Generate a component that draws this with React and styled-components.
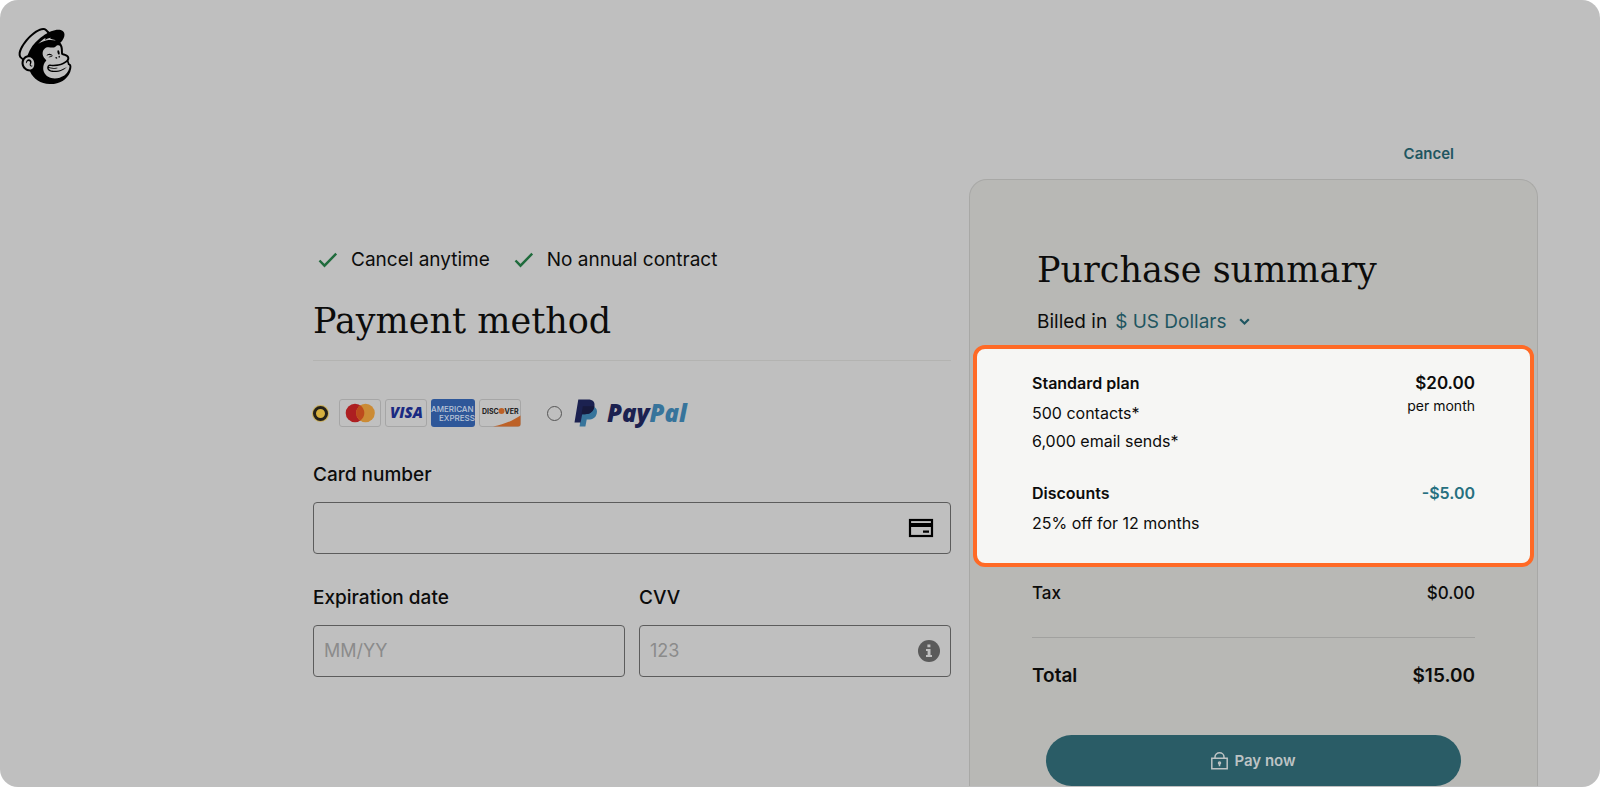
import React, { useState } from 'react';
import styled, { createGlobalStyle } from 'styled-components';
import { SiMailchimp } from 'react-icons/si';

const GlobalStyle = createGlobalStyle`
  * {
    box-sizing: border-box;
  }

  body {
    margin: 0;
    background: #fff;
    color: #0c0c0b;
    font-family: Inter, "Liberation Sans", sans-serif;
  }
`;

const Page = styled.div`
  min-height: 100vh;
  border-radius: 18px;
  background: #bfbfbf;
  overflow: hidden;
`;

const Header = styled.header`
  display: flex;
  padding: 28px 17px 0;

  a {
    display: flex;
    color: #000;
  }
`;

const Main = styled.main`
  display: grid;
  grid-template-columns: minmax(0, 638fr) minmax(0, 569fr);
  gap: 18px;
  padding: 60px 62px 0 313px;
`;

const PaymentForm = styled.form`
  padding-top: 104px;
`;

const Benefits = styled.ul`
  display: flex;
  gap: 24px;
  margin: 0 0 25px;
  padding: 0 0 0 5px;
  list-style: none;
  font-size: 19px;
  line-height: 24px;

  li {
    display: flex;
    align-items: center;
    gap: 13px;
  }
`;

const Title = styled.h2`
  margin: 0;
  font-family: "DejaVu Serif", serif;
  font-size: 35px;
  font-weight: 400;
  line-height: 48px;
`;

const FormTitle = styled(Title)`
  padding-bottom: 15px;
  border-bottom: 1px solid #b3b3b1;
`;

const Methods = styled.fieldset`
  display: flex;
  align-items: center;
  gap: 26px;
  height: 28px;
  margin: 38px 0 36px;
  padding: 0;
  border: 0;
`;

const Method = styled.label`
  display: flex;
  align-items: center;
  gap: ${props => props.$gap};
`;

const Radio = styled.input`
  appearance: none;
  width: 15px;
  height: 15px;
  margin: 0;
  border: 1px solid #555;
  border-radius: 50%;

  &:checked {
    border: 3px solid #24211a;
    background: #d6b03f;
    box-shadow: 0 0 0 1px #c9ae58;
  }
`;

const Cards = styled.span`
  display: flex;
  gap: 4px;
`;

const PayPalName = styled.span`
  color: #1b2150;
  font-family: "Open Sans", sans-serif;
  font-size: 24px;
  font-style: italic;
  font-weight: 800;
  line-height: 28px;

  span {
    color: #37749b;
  }
`;

const PayPalLogo = styled.span`
  display: flex;
  align-items: center;
  gap: 9px;
`;

const Field = styled.div`
  flex: 1;
  min-width: 0;
  margin-bottom: 32px;

  label {
    display: block;
    margin-bottom: 15px;
    font-size: 19px;
    font-weight: 500;
    line-height: 24px;
  }
`;

const FieldRow = styled.div`
  display: flex;
  gap: 14px;
`;

const InputBox = styled.div`
  display: flex;
  align-items: center;
  height: 52px;
  padding: 0 ${props => props.$end || '10px'} 0 10px;
  border: 1px solid #5c5c5c;
  border-radius: 4px;
`;

const Input = styled.input`
  flex: 1;
  min-width: 0;
  padding: 0;
  border: 0;
  outline: 0;
  background: transparent;
  font: 18px/24px Inter, "Liberation Sans", sans-serif;

  &::placeholder {
    color: #8b8b8b;
    opacity: 1;
  }
`;

const CancelRow = styled.div`
  padding: 0 84px 15px;
  font-size: 15px;
  font-weight: 600;
  line-height: 20px;
  text-align: right;

  a {
    color: #1f5661;
    text-decoration: none;
  }
`;

const Panel = styled.section`
  padding-top: 66px;
  border: 1px solid #a8a8a6;
  border-bottom: 0;
  border-radius: 18px 18px 0 0;
  background: #b8b8b5;
`;

const PanelHead = styled.div`
  padding: 0 67px;
`;

const Currency = styled.div`
  display: flex;
  align-items: center;
  gap: 8px;
  margin: 16px 0 11px;
  font-size: 19px;
  line-height: 24px;
`;

const CurrencySelect = styled.span`
  display: flex;
  align-items: center;
  gap: 12px;
  color: #1f5661;

  select {
    appearance: none;
    padding: 0;
    border: 0;
    outline: 0;
    background: transparent;
    color: inherit;
    font: inherit;
  }
`;

const Highlight = styled.div`
  margin: 0 3px;
  padding: 22px 55px 26px;
  border: 4px solid #ff6a26;
  border-radius: 12px;
  background: #f6f6f4;
`;

const Item = styled.div`
  display: flex;
  justify-content: space-between;

  & + & {
    margin-top: 26px;
  }

  h3 {
    margin: 0 0 4px;
    font-size: 16px;
    font-weight: 600;
    line-height: 24px;
  }

  p {
    margin: 0;
    font-size: 16px;
    line-height: 28px;
  }
`;

const Price = styled.div`
  color: ${props => (props.$discount ? '#267080' : 'inherit')};
  font-size: ${props => (props.$discount ? '16px' : '17px')};
  font-weight: 600;
  line-height: 24px;
  text-align: right;

  small {
    display: block;
    font-size: 14px;
    font-weight: 400;
    line-height: 22px;
  }
`;

const Totals = styled.div`
  padding: 14px 62px 0;
`;

const TotalLine = styled.div`
  display: flex;
  justify-content: space-between;
  font-size: ${props => (props.$big ? '19px' : '17px')};
  font-weight: ${props => (props.$big ? 600 : 500)};
  line-height: 24px;

  & + & {
    margin-top: 32px;
    padding-top: 26px;
    border-top: 1px solid #a1a19f;
  }
`;

const PayButton = styled.button`
  display: flex;
  align-items: center;
  justify-content: center;
  gap: 6px;
  width: calc(100% - 28px);
  height: 51px;
  margin: 47px 14px 0;
  border: 0;
  border-radius: 26px;
  background: #2a5c66;
  color: #bdc3c4;
  font: 600 15px/24px Inter, "Liberation Sans", sans-serif;
`;

const Check = () => (
  <svg width="20" height="16" viewBox="0 0 20 16" fill="none" aria-hidden="true">
    <path d="M1.5 8.5l5 5.2L18.2 1.6" stroke="#1f6b3c" strokeWidth="2.4" />
  </svg>
);

const Chevron = () => (
  <svg width="11" height="8" viewBox="0 0 11 8" fill="none" aria-hidden="true">
    <path d="M1.2 1.2l4.3 4.3 4.3-4.3" stroke="#1f5661" strokeWidth="2.2" />
  </svg>
);

const CardBlank = () => (
  <rect x=".5" y=".5" width="41" height="27" rx="2.5" fill="#c0c0c0" stroke="#a6a6a6" />
);

const Mastercard = () => (
  <svg width="42" height="28" role="img" aria-label="Mastercard">
    <CardBlank />
    <circle cx="16" cy="14" r="9.3" fill="#ad1f21" />
    <circle cx="26.5" cy="14" r="9.3" fill="#cb8b35" />
    <path d="M21.25 6.3a9.3 9.3 0 0 1 0 15.4a9.3 9.3 0 0 1 0-15.4z" fill="#bd4b1c" />
  </svg>
);

const Visa = () => (
  <svg width="42" height="28" role="img" aria-label="Visa">
    <CardBlank />
    <text x="5" y="19" fill="#1a2a82" fontFamily="Open Sans" fontSize="15" fontStyle="italic" fontWeight="800">VISA</text>
  </svg>
);

const Amex = () => (
  <svg width="44" height="28" role="img" aria-label="American Express">
    <rect width="44" height="28" rx="3" fill="#2e5799" />
    <g fill="#b9c4d6" fontFamily="Inter" fontSize="8" fontWeight="500">
      <text x="0" y="13">AMERICAN</text>
      <text x="8" y="22">EXPRESS</text>
    </g>
  </svg>
);

const Discover = () => (
  <svg width="42" height="28" role="img" aria-label="Discover">
    <CardBlank />
    <path d="M14 27.5c11-2 20-6 27.5-11V25a2.5 2.5 0 0 1-2.5 2.5z" fill="#bd6127" />
    <text x="3" y="14.5" fill="#222" fontFamily="Inter" fontSize="7" fontWeight="700">DISC</text>
    <circle cx="22.5" cy="12" r="3" fill="#bd6127" />
    <text x="25.5" y="14.5" fill="#222" fontFamily="Inter" fontSize="7" fontWeight="700">VER</text>
  </svg>
);

const PayPalMark = () => (
  <svg width="24" height="28" viewBox="0 0 24 28" aria-hidden="true">
    <path d="M8 7.5h11.5c3 1.4 4 3.8 3.3 6.8-1 4.5-4 6.3-8.5 6.3h-1.6l-1.3 6.9H5.6z" fill="#37749b" />
    <path d="M4.3.5h9.6c5 0 7.3 2.6 6.5 7-1 5.4-4.5 7.7-9.6 7.7H8.2L6.6 23.5H.5z" fill="#1b2150" />
    <path d="M8.8 7.3h11.6c-.9 5.6-4.4 7.9-9.6 7.9H7.5z" fill="#171a3d" />
  </svg>
);

const CardIcon = () => (
  <svg width="26" height="20" viewBox="0 0 26 20" aria-hidden="true">
    <rect x="2" y="2" width="22" height="16" fill="none" stroke="#000" strokeWidth="2.2" />
    <path d="M2 5h22v4H2zM15 12.5h6v2.2h-6z" />
  </svg>
);

const InfoIcon = () => (
  <svg width="22" height="22" viewBox="0 0 22 22" aria-hidden="true">
    <circle cx="11" cy="11" r="11" fill="#5a5a5a" />
    <path d="M9.4 4.5h3v2.8h-3zM8 9h4.5v6H14v2H8v-2h1.6v-4H8z" fill="#bfbfbf" />
  </svg>
);

const LockIcon = () => (
  <svg width="17" height="18" viewBox="0 0 17 18" fill="none" stroke="#bdc3c4" strokeWidth="1.5" aria-hidden="true">
    <path d="M.8 6.2h15.4v10.6H.8zM4 6.2V5a4.5 4.2 0 0 1 9 0v1.2M8.5 11v3.2" />
    <circle cx="8.5" cy="11" r="1" />
  </svg>
);

function App() {
  const [method, setMethod] = useState('card');
  const onMethodChange = e => setMethod(e.target.value);

  return (
    <Page>
      <GlobalStyle />
      <Header>
        <a href="#home" aria-label="Mailchimp">
          <SiMailchimp size={56} />
        </a>
      </Header>
      <Main>
        <PaymentForm id="payment" onSubmit={e => e.preventDefault()}>
          <Benefits>
            <li><Check />Cancel anytime</li>
            <li><Check />No annual contract</li>
          </Benefits>
          <FormTitle>Payment method</FormTitle>
          <Methods aria-label="Payment method">
            <Method $gap="11px">
              <Radio type="radio" name="method" value="card" checked={method === 'card'} onChange={onMethodChange} />
              <Cards>
                <Mastercard />
                <Visa />
                <Amex />
                <Discover />
              </Cards>
            </Method>
            <Method $gap="12px">
              <Radio type="radio" name="method" value="paypal" checked={method === 'paypal'} onChange={onMethodChange} />
              <PayPalLogo>
                <PayPalMark />
                <PayPalName>Pay<span>Pal</span></PayPalName>
              </PayPalLogo>
            </Method>
          </Methods>
          <Field>
            <label htmlFor="card-number">Card number</label>
            <InputBox $end="16px">
              <Input id="card-number" type="text" inputMode="numeric" />
              <CardIcon />
            </InputBox>
          </Field>
          <FieldRow>
            <Field>
              <label htmlFor="expiration">Expiration date</label>
              <InputBox>
                <Input id="expiration" type="text" placeholder="MM/YY" />
              </InputBox>
            </Field>
            <Field>
              <label htmlFor="cvv">CVV</label>
              <InputBox>
                <Input id="cvv" type="text" placeholder="123" />
                <InfoIcon />
              </InputBox>
            </Field>
          </FieldRow>
        </PaymentForm>
        <aside>
          <CancelRow>
            <a href="#cancel">Cancel</a>
          </CancelRow>
          <Panel>
            <PanelHead>
              <Title>Purchase summary</Title>
              <Currency>
                <label htmlFor="currency">Billed in</label>
                <CurrencySelect>
                  <select id="currency">
                    <option>$ US Dollars</option>
                  </select>
                  <Chevron />
                </CurrencySelect>
              </Currency>
            </PanelHead>
            <Highlight>
              <Item>
                <div>
                  <h3>Standard plan</h3>
                  <p>500 contacts*</p>
                  <p>6,000 email sends*</p>
                </div>
                <Price>
                  $20.00
                  <small>per month</small>
                </Price>
              </Item>
              <Item>
                <div>
                  <h3>Discounts</h3>
                  <p>25% off for 12 months</p>
                </div>
                <Price $discount>-$5.00</Price>
              </Item>
            </Highlight>
            <Totals>
              <TotalLine>
                <span>Tax</span>
                <span>$0.00</span>
              </TotalLine>
              <TotalLine $big>
                <span>Total</span>
                <span>$15.00</span>
              </TotalLine>
              <PayButton type="submit" form="payment">
                <LockIcon />
                Pay now
              </PayButton>
            </Totals>
          </Panel>
        </aside>
      </Main>
    </Page>
  );
}

export default App;
